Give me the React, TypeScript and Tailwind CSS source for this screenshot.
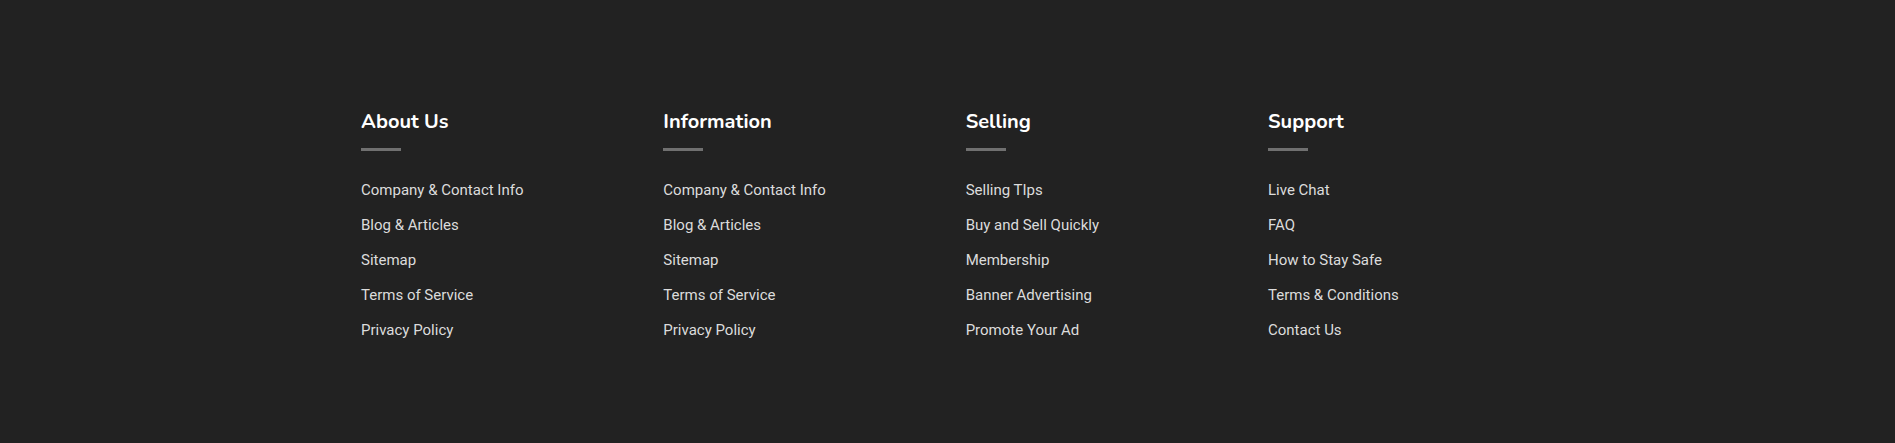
const columns = [
  {
    title: "About Us",
    links: ["Company & Contact Info", "Blog & Articles", "Sitemap", "Terms of Service", "Privacy Policy"],
  },
  {
    title: "Information",
    links: ["Company & Contact Info", "Blog & Articles", "Sitemap", "Terms of Service", "Privacy Policy"],
  },
  {
    title: "Selling",
    links: ["Selling TIps", "Buy and Sell Quickly", "Membership", "Banner Advertising", "Promote Your Ad"],
  },
  {
    title: "Support",
    links: ["Live Chat", "FAQ", "How to Stay Safe", "Terms & Conditions", "Contact Us"],
  },
];

export default function App() {
  return (
    <footer className="w-full h-[443px] bg-[#222222]">
      <div className="pl-[361px] pt-[107px] grid grid-cols-[repeat(4,302.33px)]">
        {columns.map((col) => (
          <div key={col.title}>
            <h4 className="text-[20px] leading-[30px] font-bold text-white font-['Nunito','Inter',sans-serif]">
              {col.title}
            </h4>
            <div className="mt-[11px] mb-[27px] w-10 h-[3px] bg-[#707070]" />
            <ul className="flex flex-col">
              {col.links.map((link) => (
                <li key={link} className="h-[35px] leading-[23px]">
                  <a href="#" className="text-[15px] text-[#dcdcdc] font-['Roboto',sans-serif]">
                    {link}
                  </a>
                </li>
              ))}
            </ul>
          </div>
        ))}
      </div>
    </footer>
  );
}
